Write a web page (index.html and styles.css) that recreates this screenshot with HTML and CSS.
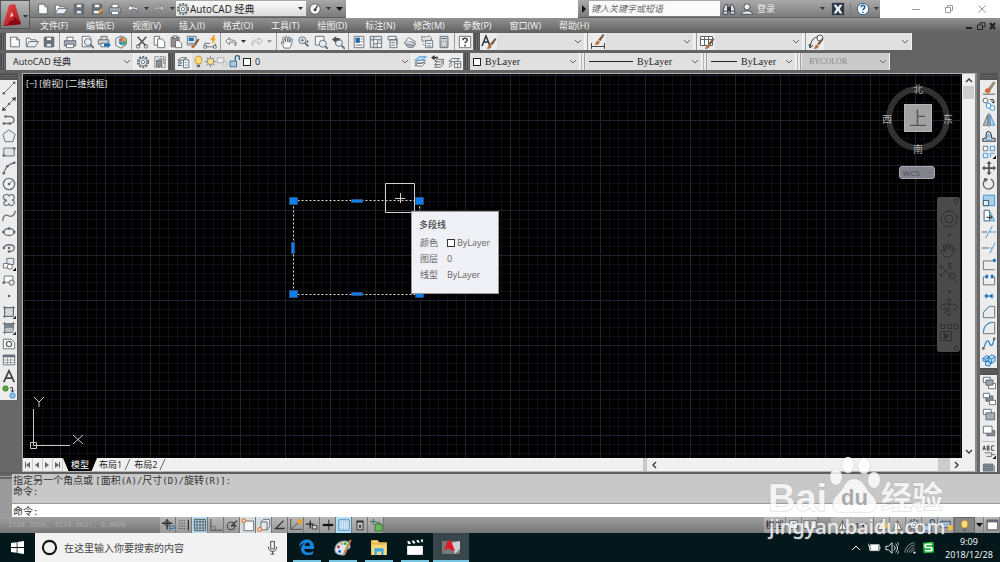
FILE: index.html
```html
<!DOCTYPE html>
<html lang="zh-CN">
<head>
<meta charset="utf-8">
<meta name="viewport" content="width=device-width, initial-scale=1">
<title>AutoCAD 经典</title>
<link rel="stylesheet" href="styles.css">
</head>
<body>
<div class="desktop">
  <header class="header">
    <button class="app-button" data-icon="app" aria-label="应用程序菜单"></button>
    <div class="titlebar">
      <div class="quick">
        <button data-icon="new" aria-label="新建"></button>
        <button data-icon="open" aria-label="打开"></button>
        <button data-icon="save" aria-label="保存"></button>
        <button data-icon="saveas" aria-label="另存为"></button>
        <button data-icon="print" aria-label="打印"></button>
        <button data-icon="undo" aria-label="放弃"></button>
        <button class="narrow" data-icon="caret" aria-label="放弃列表"></button>
        <button class="dim" data-icon="redo" aria-label="重做"></button>
        <button class="narrow" data-icon="caret" aria-label="重做列表"></button>
        <div class="title-combo"><span data-icon="gear"></span><select aria-label="工作空间"><option>AutoCAD 经典</option></select></div>
        <button data-icon="dial" aria-label="导航"></button>
        <button class="narrow" data-icon="caret" aria-label="更多"></button>
        <button class="narrow wide-caret" data-icon="bigcaret" aria-label="自定义"></button>
      </div>
      <div class="info">
        <button class="info-arrow" data-icon="play" aria-label="展开"></button>
        <input class="info-search" type="text" placeholder="键入关键字或短语" aria-label="搜索">
        <button data-icon="binoc" aria-label="查找"></button>
        <button data-icon="user" aria-label="用户"></button>
        <button class="login">登录</button>
        <button class="narrow push" data-icon="caret" aria-label="登录菜单"></button>
        <button class="exchange" data-icon="exchange" aria-label="Exchange"></button>
        <span class="bar"></span>
        <button data-icon="helpround" aria-label="帮助"></button>
        <button class="narrow" data-icon="caret" aria-label="帮助菜单"></button>
      </div>
      <div class="window-controls">
        <button data-icon="min" aria-label="最小化"></button>
        <button data-icon="restore" aria-label="还原"></button>
        <button data-icon="close" aria-label="关闭"></button>
      </div>
    </div>
    <nav class="menubar">
      <button>文件(F)</button><button>编辑(E)</button><button>视图(V)</button><button>插入(I)</button><button>格式(O)</button><button>工具(T)</button><button>绘图(D)</button><button>标注(N)</button><button>修改(M)</button><button>参数(P)</button><button>窗口(W)</button><button>帮助(H)</button>
      <div class="doc-controls">
        <button data-icon="docmin" aria-label="最小化图形"></button>
        <button data-icon="docrestore" aria-label="还原图形"></button>
        <button data-icon="docclose" aria-label="关闭图形"></button>
      </div>
    </nav>
  </header>

  <div class="toolbars">
    <div class="toolbar-row">
      <div class="toolbar">
        <i class="grip"></i>
        <button data-icon="new" aria-label="新建"></button>
        <button data-icon="open" aria-label="打开"></button>
        <button data-icon="save" aria-label="保存"></button>
        <i class="sep"></i>
        <button data-icon="print" aria-label="打印"></button>
        <button data-icon="preview" aria-label="打印预览"></button>
        <button data-icon="publish" aria-label="发布"></button>
        <button data-icon="cube" aria-label="三维 DWF"></button>
        <i class="sep"></i>
        <button data-icon="cut" aria-label="剪切"></button>
        <button data-icon="copy" aria-label="复制"></button>
        <button data-icon="paste" aria-label="粘贴"></button>
        <button data-icon="match" aria-label="特性匹配"></button>
        <button data-icon="blockedit" aria-label="块编辑器"></button>
        <i class="sep"></i>
        <button data-icon="undo" aria-label="放弃"></button>
        <button class="narrow" data-icon="caret" aria-label="放弃列表"></button>
        <button class="dim" data-icon="redo" aria-label="重做"></button>
        <button class="narrow dim" data-icon="caret" aria-label="重做列表"></button>
        <i class="sep"></i>
        <button data-icon="hand" aria-label="平移"></button>
        <button data-icon="zoomrt" aria-label="实时缩放"></button>
        <button data-icon="zoomwin" aria-label="窗口缩放"></button>
        <button data-icon="zoomprev" aria-label="缩放上一个"></button>
        <i class="sep"></i>
        <button data-icon="props" aria-label="特性"></button>
        <button data-icon="dcenter" aria-label="设计中心"></button>
        <button data-icon="palette" aria-label="工具选项板"></button>
        <button data-icon="sheets" aria-label="图纸集"></button>
        <button data-icon="markup" aria-label="标记集"></button>
        <button data-icon="calc" aria-label="快速计算器"></button>
        <i class="sep"></i>
        <button data-icon="helpsq" aria-label="帮助"></button>
      </div>
      <div class="toolbar">
        <i class="grip"></i>
        <button data-icon="textstyle" aria-label="文字样式管理"></button>
        <select class="combo w88" aria-label="文字样式"><option></option></select>
        <i class="sep"></i>
        <button data-icon="dimstyle" aria-label="标注样式管理"></button>
        <select class="combo w88" aria-label="标注样式"><option></option></select>
        <i class="sep"></i>
        <button data-icon="tablestyle" aria-label="表格样式管理"></button>
        <select class="combo w88" aria-label="表格样式"><option></option></select>
        <i class="sep"></i>
        <button data-icon="leaderstyle" aria-label="多重引线样式管理"></button>
        <select class="combo w88" aria-label="多重引线样式"><option></option></select>
      </div>
    </div>
    <div class="toolbar-row">
      <div class="toolbar">
        <i class="grip"></i>
        <select class="combo w128" aria-label="工作空间"><option>AutoCAD 经典</option></select>
        <button data-icon="gear" aria-label="工作空间设置"></button>
        <button data-icon="myspace" aria-label="我的工作空间"></button>
      </div>
      <div class="toolbar">
        <i class="grip"></i>
        <button data-icon="layerprops" aria-label="图层特性"></button>
        <div class="combo-box w220">
          <span data-icon="bulb"></span><span data-icon="sun"></span><span data-icon="vpfreeze"></span><span data-icon="unlock"></span><span class="swatch"></span>
          <select class="combo" aria-label="图层"><option>0</option></select>
        </div>
        <button data-icon="layercur" aria-label="置为当前"></button>
        <button data-icon="layerprev" aria-label="上一个图层"></button>
        <button data-icon="layerstate" aria-label="图层状态"></button>
      </div>
      <div class="toolbar">
        <i class="grip"></i>
        <div class="combo-box w110">
          <span class="swatch"></span>
          <select class="combo serif" aria-label="颜色"><option>ByLayer</option></select>
        </div>
        <i class="sep double"></i>
        <div class="combo-box w116">
          <span class="line long"></span>
          <select class="combo serif" aria-label="线型"><option>ByLayer</option></select>
        </div>
        <i class="sep double"></i>
        <div class="combo-box w88">
          <span class="line"></span>
          <select class="combo serif" aria-label="线宽"><option>ByLayer</option></select>
        </div>
        <i class="sep double"></i>
        <select class="combo w88 off" aria-label="打印样式" disabled><option>BYCOLOR</option></select>
      </div>
    </div>
  </div>

  <main class="work">
    <div class="side-tools">
      <i class="grip-top"></i>
      <button data-icon="line" aria-label="直线"></button>
      <button data-icon="xline" aria-label="构造线"></button>
      <button data-icon="pline" aria-label="多段线"></button>
      <button data-icon="polygon" aria-label="多边形"></button>
      <button data-icon="rect" aria-label="矩形"></button>
      <button data-icon="arc" aria-label="圆弧"></button>
      <button data-icon="circle" aria-label="圆"></button>
      <button data-icon="cloud" aria-label="修订云线"></button>
      <button data-icon="spline" aria-label="样条曲线"></button>
      <button data-icon="ellipse" aria-label="椭圆"></button>
      <button data-icon="earc" aria-label="椭圆弧"></button>
      <button data-icon="insert" aria-label="插入块"></button>
      <button data-icon="block" aria-label="创建块"></button>
      <button data-icon="point" aria-label="点"></button>
      <button data-icon="hatch" aria-label="图案填充"></button>
      <button data-icon="gradient" aria-label="渐变色"></button>
      <button data-icon="region" aria-label="面域"></button>
      <button data-icon="table" aria-label="表格"></button>
      <button data-icon="mtext" aria-label="多行文字"></button>
      <button data-icon="addsel" aria-label="添加选定对象"></button>
    </div>

    <section class="drawing">
      <div class="view">
        <div class="canvas">
          <p class="view-label">[−] [俯视] [二维线框]</p>
          <svg class="selection" width="160" height="130" viewBox="0 0 160 130">
            <g fill="none" stroke="#d8d8d0" stroke-dasharray="2 2">
              <path d="M15.5 24.5H141.500V118.500H15.500Z"/>
            </g>
            <g fill="#0a7ff0" stroke="#2b4f7c">
              <path d="M11.500 21.500h8v7h-8zM137.500 21.500h8v7h-8zM11.500 114.500h8v7h-8zM137.500 114.500h8v7h-8zM73.500 23.500h11v3h-11zM73.500 116.500h11v3h-11zM13.500 66.500h3v11h-3z"/>
            </g>
            <path d="M107.500 7.500h29v29h-29zM117 22.500h10M122.500 17v10" fill="none" stroke="#d2d2cc"/>
          </svg>
          <div class="tooltip">
            <strong>多段线</strong>
            <dl>
              <dt>颜色</dt><dd><span class="tip-swatch"></span>ByLayer</dd>
              <dt>图层</dt><dd>0</dd>
              <dt>线型</dt><dd>ByLayer</dd>
            </dl>
          </div>
          <div class="compass">
            <span class="n">北</span><span class="w">西</span><button class="face">上</button><span class="e">东</span><span class="s">南</span>
          </div>
          <button class="wcs">WCS <i></i></button>
          <div class="navbar">
            <svg width="23" height="155" viewBox="0 0 23 155" fill="none" stroke="#303030">
              <circle cx="19" cy="4" r="2"/><circle cx="12" cy="22" r="8"/><circle cx="12" cy="22" r="4"/>
              <path d="M11 37h3l-1.500 2zM11 66h3l-1.500 2zM11 94h3l-1.500 2z" fill="#303030"/>
              <path d="M8 60c-3-4-5-6-4-7s3 1 4 2l-2-6c0-1 2-1 2 0l1 4 1-6c0-1 2-1 2 0v6l2-5c1-1 2 0 2 1l-1 5 3-2c1 0 1 1 0 2l-5 6z"/>
              <path d="M3 69l11 10M14 69L3 79M3 72v-3h3M11 69h3v3M3 76v3h3"/><circle cx="15" cy="79" r="3"/><path d="M17 81l3 4"/>
              <path d="M12 101v18M9 104l3-3 3 3M9 116l3 3 3-3M10 113c-9 0-9-6 0-6h4c8 0 8 5 2 6M7 110l4 3-4 3"/>
              <path d="M3.500 127.500h4v4h-4zM10.500 127.500h4v4h-4zM16.500 127.500h4v4h-4zM3.500 134.500h11v9h-11z"/><path d="M7 136v6l5-3z" fill="#303030"/>
              <circle cx="19" cy="151" r="2"/>
            </svg>
          </div>
          <svg class="ucs" width="66" height="60" viewBox="0 0 66 60" fill="none" stroke="#c8c8c8">
            <path d="M4.500 48.500h6v6h-6zM7.500 51.500V15M7.500 51.500H44M8 3l5 5 5-5M13 8v5M47 41l10 9M57 41l-10 9"/>
          </svg>
        </div>
        <div class="vscroll">
          <button data-icon="chevup" aria-label="向上滚动"></button>
          <span class="thumb"></span>
          <button class="last" data-icon="chevdown" aria-label="向下滚动"></button>
        </div>
      </div>
      <div class="tabs">
        <button class="step" data-icon="first" aria-label="第一个"></button>
        <button class="step" data-icon="prev" aria-label="上一个"></button>
        <button class="step" data-icon="next" aria-label="下一个"></button>
        <button class="step" data-icon="last" aria-label="最后一个"></button>
        <button class="tab active">模型</button>
        <button class="tab">布局1</button>
        <button class="tab">布局2</button>
        <div class="hscroll">
          <span class="splitter"></span>
          <button data-icon="chevleft" aria-label="向左滚动"></button>
          <span class="thumb"></span>
          <button data-icon="chevright" aria-label="向右滚动"></button>
        </div>
      </div>
    </section>

    <div class="side-tools right">
      <i class="grip-top"></i>
      <button data-icon="erase" aria-label="删除"></button>
      <button data-icon="copyobj" aria-label="复制"></button>
      <button data-icon="mirror" aria-label="镜像"></button>
      <button data-icon="offset" aria-label="偏移"></button>
      <button data-icon="array" aria-label="阵列"></button>
      <button data-icon="move" aria-label="移动"></button>
      <button data-icon="rotate" aria-label="旋转"></button>
      <button data-icon="scale" aria-label="缩放"></button>
      <button data-icon="stretch" aria-label="拉伸"></button>
      <button data-icon="trim" aria-label="修剪"></button>
      <button data-icon="extend" aria-label="延伸"></button>
      <button data-icon="breakpt" aria-label="打断于点"></button>
      <button data-icon="break" aria-label="打断"></button>
      <button data-icon="join" aria-label="合并"></button>
      <button data-icon="chamfer" aria-label="倒角"></button>
      <button data-icon="fillet" aria-label="圆角"></button>
      <button data-icon="blend" aria-label="光顺曲线"></button>
      <button data-icon="explode" aria-label="分解"></button>
      <i class="grip-top"></i>
      <button data-icon="front" aria-label="前置"></button>
      <button data-icon="back" aria-label="后置"></button>
      <button data-icon="above" aria-label="置于对象之上"></button>
      <button data-icon="under" aria-label="置于对象之下"></button>
      <i class="side-sep"></i>
      <button data-icon="abc" aria-label="注释前置"></button>
      <button data-icon="hatchback" aria-label="图案填充后置"></button>
    </div>
  </main>

  <section class="command">
    <i class="command-grip"></i>
    <div class="command-body">
      <div class="history">
        <p>指定另一个角点或 <span class="latin">[</span>面积<span class="latin">(A)/</span>尺寸<span class="latin">(D)/</span>旋转<span class="latin">(R)]:</span></p>
        <p>命令<span class="latin">:</span></p>
      </div>
      <div class="prompt"><label for="cmd">命令<span class="latin">:</span></label><input id="cmd" type="text"></div>
    </div>
  </section>

  <footer class="status">
    <span class="coords">2188.3856, 1534.8837, 0.0000</span>
    <div class="modes">
      <button data-icon="infer" aria-label="推断约束"></button>
      <button data-icon="snap" aria-label="捕捉模式"></button>
      <button class="on" data-icon="grid" aria-label="栅格显示"></button>
      <button data-icon="ortho" aria-label="正交模式"></button>
      <button data-icon="polar" aria-label="极轴追踪"></button>
      <button class="on pale" data-icon="osnap" aria-label="对象捕捉"></button>
      <button class="on pale" data-icon="osnap3" aria-label="三维对象捕捉"></button>
      <button data-icon="otrack" aria-label="对象捕捉追踪"></button>
      <button data-icon="ducs" aria-label="动态 UCS"></button>
      <button data-icon="dyn" aria-label="动态输入"></button>
      <button data-icon="lwt" aria-label="线宽"></button>
      <button class="on" data-icon="tpy" aria-label="透明度"></button>
      <button data-icon="qp" aria-label="快捷特性"></button>
      <button data-icon="sc" aria-label="选择循环"></button>
    </div>
    <div class="status-right">
      <button class="model">模型</button>
      <button data-icon="qvlayout" aria-label="快速查看布局"></button>
      <button data-icon="qvdrawing" aria-label="快速查看图形"></button>
      <button class="scale"><span data-icon="anno"></span>1:1<span data-icon="bigcaret"></span></button>
      <button data-icon="annovis" aria-label="注释可见性"></button>
      <button data-icon="anno" aria-label="自动添加比例"></button>
      <button data-icon="gear" aria-label="切换工作空间"></button>
      <button data-icon="unlock" aria-label="锁定"></button>
      <button data-icon="hardware" aria-label="硬件加速"></button>
      <button class="isolate" data-icon="bulb" aria-label="隔离对象"></button>
      <button class="narrow" data-icon="bigcaret" aria-label="状态栏菜单"></button>
      <button data-icon="clean" aria-label="全屏显示"></button>
    </div>
  </footer>

  <nav class="taskbar">
    <button class="start" data-icon="windows" aria-label="开始"></button>
    <label class="search">
      <span data-icon="cortana"></span>
      <input type="text" placeholder="在这里输入你要搜索的内容" aria-label="搜索">
      <span data-icon="mic"></span>
    </label>
    <button class="task" data-icon="edge" aria-label="Edge"></button>
    <button class="task" data-icon="paint" aria-label="画图"></button>
    <button class="task" data-icon="folder" aria-label="文件资源管理器"></button>
    <button class="task" data-icon="clapper" aria-label="视频"></button>
    <button class="task current" data-icon="acad" aria-label="AutoCAD"></button>
    <div class="tray">
      <button data-icon="trayup" aria-label="显示隐藏的图标"></button>
      <button data-icon="battery" aria-label="电池"></button>
      <button data-icon="volume" aria-label="音量"></button>
      <button data-icon="wifi" aria-label="网络"></button>
      <button data-icon="sogou" aria-label="输入法"></button>
      <button class="clock"><span>9:09</span><span>2018/12/28</span></button>
    </div>
  </nav>

  <svg class="watermark" width="182" height="86" viewBox="0 0 182 86" role="img" aria-label="Baidu 经验">
    <g class="mark">
      <text class="mark-latin" x="1" y="56">Bai</text>
      <ellipse cx="69" cy="22" rx="6" ry="8"/><ellipse cx="81" cy="10" rx="6" ry="8"/><ellipse cx="97" cy="11" rx="6" ry="8"/><ellipse cx="107" cy="25" rx="6" ry="8"/>
      <path d="M87 24c8 0 11 7 14 12 5 6 10 9 8 16-2 7-10 5-22 5s-19 2-21-5c-2-7 4-11 8-16 4-5 5-12 13-12z"/>
      <text class="mark-cjk" x="114" y="53">经验</text>
      <text class="mark-url" x="2" y="79">jingyan.baidu.com</text>
    </g>
    <text class="mark-du" x="74" y="50">du</text>
  </svg>
</div>
<script src="icons.js"></script>
</body>
</html>
```
FILE: styles.css
```css
* { box-sizing: border-box; }
body {
  margin: 0;
  font: 9px/12px "Open Sans", "Noto Sans CJK SC", sans-serif;
  color: #222;
  background: #686868;
}
button, input, select { font: inherit; color: inherit; margin: 0; padding: 0; border: 0; border-radius: 0; background: none; }
button { display: flex; align-items: center; justify-content: center; white-space: nowrap; }
select { appearance: none; }
input { min-width: 0; }
p, dl, dd { margin: 0; }
svg { display: block; flex: none; }
[data-icon] { display: flex; flex: none; align-items: center; justify-content: center; }
.dim { opacity: 0.45; }

.desktop { position: relative; display: flex; flex-direction: column; height: 100vh; overflow: hidden; }

/* Title and menu */
.header { display: grid; grid-template-columns: 30px 1fr; grid-template-rows: 18px 15px; background: linear-gradient(#8e8e8e, #6a6a6a); }
.app-button { grid-row: 1 / 3; height: 29px; background: linear-gradient(#b8b8b8, #7c7c7c); border: 1px solid #555; }
.titlebar { display: flex; background: #fff; }
.quick, .info { display: flex; align-items: center; background: linear-gradient(#a9a9a9, #7b7b7b); border-bottom: 1px solid #5c5c5c; }
.quick { padding-left: 4px; }
.quick > button, .info > button { width: 18px; height: 17px; }
.quick > .narrow, .info > .narrow, .narrow { width: 8px; }
.quick > .wide-caret { width: 14px; }
.title-combo { display: flex; align-items: center; width: 130px; height: 15px; background: linear-gradient(#fafafa, #dcdcdc); }
.title-combo select { flex: 1; height: 15px; font-size: 10px; background: url("data:image/svg+xml,%3Csvg xmlns='http://www.w3.org/2000/svg' width='6' height='4'%3E%3Cpath d='M0 0h5L2.500 3z' fill='%23333'/%3E%3C/svg%3E") no-repeat right 2px center; }
.info { flex: 0 0 302px; margin-left: auto; }
.info > .info-arrow { width: 11px; }
.info-search { width: 131px; height: 15px; padding-left: 2px; background: #fafafa; }
.info-search::placeholder { color: #666; font-style: italic; opacity: 1; }
.info > .login { width: 20px; color: #eee; font-size: 9px; }
.info > .push { margin-left: auto; }
.info > .exchange { margin-left: 3px; }
.bar { width: 1px; height: 12px; margin: 0 3px; background: #777; }
.window-controls { display: flex; flex: 0 0 120px; justify-content: flex-end; padding-right: 2px; }
.window-controls button { width: 33px; height: 17px; }
.menubar { display: flex; align-items: center; padding-left: 10px; gap: 18px; color: #f4f4f4; background: linear-gradient(#929292, #606060); }
.doc-controls { display: flex; margin-left: auto; padding-right: 1px; }
.doc-controls button { width: 12px; }

/* Toolbars */
.toolbars { display: flex; flex-direction: column; gap: 3px; padding-bottom: 3px; background: #636363; }
.toolbar-row { display: flex; gap: 1px; }
.toolbar { display: flex; height: 17px; background: #ececec; }
.toolbar button { width: 17px; height: 17px; }
.toolbar .narrow { width: 9px; }
.grip { width: 6px; background: repeating-linear-gradient(90deg, #4a4a4a 0 1px, #6c6c6c 1px 2px); border: 1px solid #565656; }
.sep { width: 4px; border-right: 1px solid #9c9c9c; margin-right: 1px; margin-left: -1px; }
.double { width: 4px; margin: 0 1px; border-left: 1px solid #b4b4b4; }
.combo {
  background: #e0e0e0 url("data:image/svg+xml,%3Csvg xmlns='http://www.w3.org/2000/svg' width='8' height='6'%3E%3Cpath d='M1 1l3 3 3-3' fill='none' stroke='%23666'/%3E%3C/svg%3E") no-repeat right 2px center;
  height: 17px; padding-left: 7px; border-right: 1px solid #f6f6f6;
}
.combo-box { display: flex; align-items: center; background: #e0e0e0; }
.combo-box [data-icon] { width: 12px; }
.combo-box .combo { flex: 1; min-width: 0; padding-left: 4px; }
.swatch { flex: none; width: 8px; height: 8px; margin-left: 3px; background: #fff; border: 1px solid #222; }
.line { flex: none; width: 26px; height: 1px; margin-left: 3px; background: #222; }
.line.long { width: 44px; }
.serif { font-family: "Liberation Serif", serif; font-size: 10px; }
.off { color: #888; background-color: #cacaca; font: 8px "Liberation Serif", serif; opacity: 1; }
.w88 { width: 88px; }
.w110 { width: 110px; }
.w116 { width: 116px; }
.w128 { width: 128px; }
.w220 { width: 220px; }

/* Work area */
.work { display: flex; flex: 1; min-height: 0; }
.side-tools { display: flex; flex: none; flex-direction: column; align-self: flex-start; width: 18px; background: #ececec; border-right: 1px solid #555; }
.side-tools.right { align-self: stretch; margin: 0 2px 0 3px; overflow: hidden; }
.side-tools button { flex: none; height: 16px; }
.grip-top { flex: none; height: 7px; background: repeating-linear-gradient(#4c4c4c 0 1px, #666 1px 2px); border: 1px solid #555; }
.side-sep { flex: none; height: 1px; margin: 2px; background: #bbb; }
.drawing { display: flex; flex: 1; flex-direction: column; margin-left: 4px; border: 1px solid #b4b4b4; border-right: 2px solid #8a8a8a; background: #f0f0f0; }
.view { display: flex; flex: 1; }
.canvas {
  position: relative; flex: 1; overflow: hidden; background-color: #000;
  background-image:
    linear-gradient(90deg, #22222c 1px, transparent 1px), linear-gradient(#22222c 1px, transparent 1px),
    linear-gradient(90deg, #0f0f13 1px, transparent 1px), linear-gradient(#0f0f13 1px, transparent 1px);
  background-size: 45px 45px, 45px 45px, 9px 9px, 9px 9px;
  background-position: 37px 1px;
}
.view-label { padding: 4px 3px; color: #e4e4e4; }
.selection { position: absolute; left: 255px; top: 102px; }
.tooltip { position: absolute; left: 388px; top: 137px; width: 88px; padding: 7px; color: #666; background: #f0f0f7; border: 1px solid #999; }
.tooltip strong { font-weight: 500; color: #444; }
.tooltip dl { display: grid; grid-template-columns: 27px 1fr; padding: 4px 0 3px 1px; line-height: 16px; }
.tooltip dd { display: flex; align-items: center; gap: 2px; }
.tip-swatch { width: 8px; height: 8px; border: 1px solid #333; background: #fff; }
.compass { position: absolute; right: 12px; top: 12px; width: 64px; height: 65px; border: 6px solid #313131; border-radius: 50%; color: #aaa; font-size: 10px; }
.compass span { position: absolute; line-height: 12px; }
.compass .n { left: 21px; top: -9px; }
.compass .s { left: 21px; top: 51px; }
.compass .w { left: -10px; top: 21px; }
.compass .e { left: 51px; top: 21px; }
.face { width: 28px; height: 28px; margin: 12px; color: #555; background: #a2a2a2; border: 1px solid #b4b4b4; font-size: 18px; }
.wcs { position: absolute; right: 27px; top: 92px; width: 36px; height: 13px; gap: 5px; color: #4a4a52; background: #84848e; border: 1px solid #aaaab4; border-radius: 3px; font-size: 8px; }
.wcs i { width: 6px; border-top: 1px solid #777; }
.navbar { position: absolute; right: 2px; top: 123px; background: #4a4a4a; border-radius: 3px; }
.ucs { position: absolute; left: 3px; bottom: 4px; }
.vscroll { display: flex; flex-direction: column; width: 13px; background: #f0f0f0; }
.vscroll button { height: 12px; }
.vscroll .thumb { height: 13px; margin: 0 1px; background: #cdcdcd; }
.vscroll .last { margin-top: auto; }
.tabs { display: flex; height: 13px; }
.step { width: 10px; border-right: 1px solid #ccc; }
.tab { padding: 0 0 0 6px; }
.tab::after { content: ""; width: 1px; height: 11px; margin-left: 5px; background: #666; transform: skewX(-24deg); }
.tab.active { padding: 0 8px; color: #fff; background: #000; clip-path: polygon(0 0, 100% 0, 84% 100%, 16% 100%); }
.tab.active::after { content: none; }
.tab.active + .tab { padding-left: 2px; }
.hscroll { display: flex; flex: 1 1 0; max-width: 332px; margin-left: auto; padding-right: 12px; }
.splitter { width: 4px; background: #c8c8c8; }
.hscroll button { width: 13px; }
.hscroll .thumb { width: 12px; margin-left: auto; background: #cdcdcd; }

/* Command line */
.command { display: flex; padding-top: 2px; background: #5e5e5e; }
.command-grip { width: 12px; background: #9a9a9a; border-top: 5px double #666; }
.command-body { flex: 1; font: 10px/11px "Noto Sans CJK SC", sans-serif; color: #333; }
.latin { font: 9px/9px "DejaVu Sans Mono", monospace; }
.history { height: 30px; padding-left: 1px; background: #c8c8c8; border-bottom: 1px solid #999; }
.history p { height: 11px; }
.prompt { display: flex; padding-left: 1px; background: #fff; height: 13px; line-height: 13px; }
.prompt input { flex: 1; }

/* Status bar */
.status { display: flex; height: 16px; background: linear-gradient(#9e9e9e, #767676); }
.coords { width: 160px; padding-left: 8px; color: #a8a8a8; font: 7px/17px "DejaVu Sans Mono", monospace; }
.modes, .status-right { display: flex; }
.modes button { width: 16px; border-right: 1px solid #777; background: linear-gradient(#b8b8b8, #989898); }
.modes .on { background: #b4def2; }
.modes .pale { background: #d4dce0; }
.status-right { margin-left: auto; }
.status-right button { height: 16px; width: 16px; background: linear-gradient(#b8b8b8, #989898); border-right: 1px solid #808080; }
.status-right .model { width: 22px; }
.status-right .scale { width: 43px; margin-left: 13px; font-size: 8px; }
.status-right .isolate { width: 21px; background: #858585; border: 1px solid #666; }
.status-right .narrow { width: 9px; }

/* Taskbar */
.taskbar { display: flex; height: 29px; background: #04181c; color: #fff; }
.start { width: 35px; }
.search { display: flex; align-items: center; width: 252px; padding: 0 7px 0 6px; gap: 6px; color: #222; background: #f2f2f2; }
.search input { flex: 1; font-size: 10px; }
.search input::placeholder { color: #444; opacity: 1; }
.task { width: 28px; margin-left: 8px; border-bottom: 2px solid #76c5e0; padding-top: 1px; }
.search + .task { margin-left: 6px; }
.task.current { width: 36px; margin-left: 4px; background: #37474b; }
.tray { display: flex; align-items: center; margin-left: auto; padding-right: 4px; }
.tray > button { width: 18px; }
.tray > .clock { flex-direction: column; width: 54px; margin-left: 5px; line-height: 13px; }

.watermark { position: absolute; right: 51px; bottom: 21px; pointer-events: none; }
.mark { fill: #fff; fill-opacity: 0.82; stroke: #9a9a9a; stroke-opacity: 0.4; stroke-width: 1px; paint-order: stroke; }
.mark-latin { font: bold 38px "Liberation Sans", sans-serif; }
.mark-cjk { font: bold 31px "Noto Sans CJK SC", sans-serif; }
.mark-url { font: 500 20px "Noto Sans", sans-serif; }
.mark-du { font: bold 22px "Liberation Sans", sans-serif; fill: #aaa; }
```
FILE: icons.js
```js
// Each entry: [width, height, markup]; drawings use a 16-unit box unless a viewBox is given as a fourth item.
const K = '#5c666f', B = '#3a90d4';
const page = 'M3 2.500h7l3 3v8H3z';
const P = (d, stroke = K, fill = 'none') => `<path d="${d}" stroke="${stroke}" fill="${fill}"/>`;
const dot = (x, y, c = K) => `<circle cx="${x}" cy="${y}" r="1.500" fill="${c}"/>`;
const lens = (x, y) => `<circle cx="${x}" cy="${y}" r="4" fill="#e4eef5" stroke="${K}"/>` + `<path d="M${x + 3} ${y + 3}l4 4" stroke="${K}" stroke-width="2"/>`;
const brush = '<path d="M9 10l5-6 1.500 1-4 6z" fill="#7a5a40"/><path d="M6 15c1-4 2-5 4-4 2 2-1 4-4 4z" fill="#b8703c"/>';
const small = (m) => [14, 14, m];

const icons = {
  app: [28, 26, '<defs><linearGradient id="ra" x2="1" y2="1"><stop stop-color="#f25050"/><stop offset="1" stop-color="#9c0c14"/></linearGradient></defs><path d="M2 24L8 3l6-1 6 20-6 1-2-5-4 1-1 4z" fill="url(#ra)"/><path d="M9 15l1.500-5 2 4z" fill="#f6c8c8"/><path d="M2 24l5-2 1-3 4-1 2-3 6 7-6 1z" fill="#8c0810"/><path d="M22 13h5l-2.500 3z" fill="#333"/>', '0 0 28 26'],
  new: small(P(page, K, '#fafafa') + P('M10 2.500v3h3')),
  open: small(P('M1.500 13V3.500h4l1 2h6v2', K, '#fff') + P('M1.500 13.500l3-6h11l-4 6z', K, '#e8eef2')),
  save: small(P('M2.500 2.500h11v11h-11z', K, '#65717c') + P('M5 2.500h6v4H5z', K, '#fff') + P('M5 9.500h6v4H5z', K, '#e8e8e8')),
  saveas: small(P('M2.500 2.500h11v11h-11z', K, '#65717c') + P('M5 2.500h6v4H5zM4 9.500h7v4H4z', K, '#fff') + '<path d="M8 13l5-6 2 2-5 5z" fill="#e09a38"/>'),
  print: small(P('M4.500 7V2.500h7V7', K, '#fff') + P('M1.500 6.500h13v6h-13z', K, '#a4adb4') + P('M4 10.500h8v4H4z', K, '#fff')),
  undo: small(P('M6 3L2 7l4 4V8.500c5-1 7 0 7 4 2-5 0-7-7-7z', K, '#f4f4f4')),
  redo: small(P('M10 3l4 4-4 4V8.500c-5-1-7 0-7 4-2-5 0-7 7-7z', K, '#f4f4f4')),
  caret: [5, 4, '<path d="M0 0h5L2.500 3z" fill="#333"/>', '0 0 5 4'],
  bigcaret: [7, 6, '<path d="M0 1h7L3.500 5z" fill="#111"/>', '0 0 7 6'],
  gear: small('<circle cx="8" cy="8" r="6" fill="none" stroke="#646d75" stroke-width="2" stroke-dasharray="2.400 1.400"/><circle cx="8" cy="8" r="4.500" fill="#f0f0f0" stroke="#646d75"/><circle cx="8" cy="8" r="2" fill="#fff" stroke="#646d75"/>'),
  dial: small('<circle cx="8" cy="8" r="6" fill="#f4f4f4" stroke="#555"/><path d="M8 9l3-5" stroke="#333" stroke-width="1.500"/><circle cx="8" cy="9" r="1.500" fill="#333"/>'),
  play: [6, 8, '<path d="M1 0l4 4-4 4z" fill="#111"/>', '0 0 6 8'],
  binoc: small('<path d="M1.500 14V8L4 3h2.500v11zM14.500 14V8L12 3H9.500v11z" fill="#d8dde2" stroke="#333d46"/><path d="M6.500 6h3v4h-3zM2 10.500h4M10 10.500h4" stroke="#333d46" fill="#333d46"/>'),
  user: small('<circle cx="8" cy="5.500" r="3.500" fill="#eee" stroke="#3c4650"/><path d="M1.500 14c1-5 12-5 13 0z" fill="#eee" stroke="#3c4650"/>'),
  exchange: small('<path d="M1 1h14v14H1z" fill="#2c3844"/><path d="M3 3h3l2 3 2-3h3l-3 5 3 5h-3l-2-3-2 3H3l3-5z" fill="#e8eef4"/>'),
  helpround: small('<circle cx="8" cy="8" r="6.500" fill="#fff" stroke="#28557c"/><path d="M6 6c0-3 4-3 4 0 0 1.500-2 1.500-2 3.500M8 11v1.500" fill="none" stroke="#2060a0" stroke-width="1.800"/>'),
  helpsq: small(P('M1.500 1.500h13v13h-13z', K, '#fff') + '<path d="M5.500 6c0-3 5-3 5 0 0 1.500-2.500 1.500-2.500 3.500M8 11v2" fill="none" stroke="#444" stroke-width="1.800"/>'),
  min: [8, 8, P('M0 4.500h8', '#999'), '0 0 8 8'],
  restore: [8, 8, P('M.5 2.500h5v5h-5zM2.500 2V.5h5v5H6', '#999'), '0 0 8 8'],
  close: [8, 8, P('M.5.5l7 7M7.500.5l-7 7', '#999'), '0 0 8 8'],
  docmin: [8, 8, '<path d="M1 5h6v2H1z" fill="#222"/>', '0 0 8 8'],
  docrestore: [9, 8, P('M.5 3h5v4.500h-5zM3 2.500V.8h5V5H6', '#222'), '0 0 9 8'],
  docclose: [8, 8, '<path d="M1 1l5 6M6 1L1 7" stroke="#222" stroke-width="2"/>', '0 0 8 8'],
  preview: small(P('M2.500 1.500h8l2 2v10h-10z', K, '#fafafa') + lens(9, 8)),
  publish: small(P('M4.500 6V1.500h7V6M1.500 5.500h12v5h-12z', K, '#cfd5da') + P('M4.500 9.500h7v4h-7z', K, '#fff') + '<path d="M8 10h4V8l4 3.500-4 3.500v-2H8z" fill="#1870c0"/>'),
  cube: small(P('M8 1l6 3v7l-6 4-6-3V4z', K, '#eef2f4') + '<circle cx="10" cy="7" r="4.500" fill="#fff" stroke="#488"/><path d="M10 7V3a4 4 0 0 1 4 4z" fill="#e0a030"/><path d="M10 7h4a4 4 0 0 1-4 4z" fill="#48a048"/><path d="M10 7v4a4 4 0 0 1-4-4z" fill="#38c"/><path d="M10 7H6a4 4 0 0 1 4-4z" fill="#d55"/>'),
  cut: small('<path d="M3 2l9 10M13 2L4 12" stroke="#555" stroke-width="1.800"/><circle cx="3.500" cy="13" r="2" fill="none" stroke="#555"/><circle cx="12.500" cy="13" r="2" fill="none" stroke="#555"/>'),
  copy: small(P('M2.500 1.500h6v10h-6z', K, '#fff') + P('M6.500 4.500h5l3 3v7h-8z', K, '#fff')),
  paste: small(P('M2.500 2.500h9v11h-9z', K, '#9a8f84') + P('M5 1h4v3H5z', K, '#ddd') + P('M7.500 6.500h4l3 3v5h-7z', K, '#fff')),
  match: small(P('M1.500 1.500h10v10h-10z', K, '#e8f1f8') + '<path d="M3 3h6v4H3z" fill="#1870c0"/>' + P('M3 9.500h6') + brush),
  blockedit: small(P('M2 13.500v-4h6M4 13.500h10v-4', K) + '<path d="M12 0l-4 6h3l-1 5 5-7h-3l2-4z" fill="#f0a020"/>' + P('M1 12h3v3H1zM12 12h3v3h-3z', K, '#fff')),
  hand: small(P('M5 15c-2-4-4-6-3.500-7s2 0 3 2L3 4c0-1.500 1.500-1.500 2 0l1.500 4L6 2.500c0-1.500 2-1.500 2 0L9 8l.5-5c0-1.500 2-1 2 0L11 8.500l1.500-4c.5-1 2-.5 1.500 1-.5 4-1 7-3 9.500z', K, '#fafafa')),
  zoomrt: small(lens(6, 6) + P('M4 6h4M6 4v4M12 9v-3M10.500 7.500h3')),
  zoomwin: small(P('M1.500 1.500h10v10h-10z', K, '#f4f7f9') + lens(10, 10)),
  zoomprev: small(lens(9, 9) + '<path d="M1 5l5-4v2.500h4v3H6V9z" fill="#555"/>'),
  props: small(P('M2.500 1.500h11v13h-11z', K, '#fff') + '<path d="M4 3h5v6H4z" fill="#2468a8"/>' + P('M10 4.500h2M10 7.500h2M4 11.500h8')),
  dcenter: small(P('M1.500 1.500h13v13h-13z', K, '#dfe5ea') + P('M5.500 2v12M2 5.500h12M9.500 6v8M6 9.500h8') + '<path d="M6 6h3v3H6zM10 10h3v3h-3z" fill="#fff"/>'),
  palette: small(P('M2.500 1.500h9v4h-9zM4.500 5.500h8v9h-8z', K, '#eef1f3') + P('M6 8.500h4M6 11.500h4M12.500 3v8')),
  sheets: small(P('M1.500 9l4-4 9 5-3 4h-6z', K, '#c8cfd5') + P('M3.500 6l3-3 8 5', K, '#fff') + P('M4 11l8 1')),
  markup: small('<path d="M2 2h6a3 3 0 0 1 5 2v3H2z" fill="#dde2e6" stroke="#555" stroke-dasharray="2 1"/>' + P('M6.500 6.500h8v8h-8z', K, '#fff') + P('M8 9.500h5M8 12.500h5M3 10l2 2')),
  calc: small(P('M3.500 1.500h9v13h-9z', K, '#d0d5d9') + P('M5 4h6', K) + '<path d="M5 7h6v6H5z" fill="none" stroke="#777" stroke-dasharray="1 1"/>'),
  textstyle: [16, 16, '<path d="M1 12L5 2l4 10M3 8h4" stroke="#333" stroke-width="1.500" fill="none"/>' + brush],
  dimstyle: [16, 16, P('M1.500 9v6M14.500 9v6M2 12.500h12', '#444') + '<g transform="translate(-1 -4)">' + brush + '</g>'],
  tablestyle: [16, 16, P('M1.500 2.500h12v9h-12zM2 5.500h11M5.500 3v8M9.500 3v8', K, '#fff') + brush],
  leaderstyle: [16, 16, P('M2 13C3 7 5 4 9 3M1 10l1 4 3-3', '#333') + '<circle cx="12" cy="4" r="3" fill="#fff" stroke="#555"/>' + brush],
  myspace: small('<path d="M2 2h12v12H2z" fill="none" stroke="#555" stroke-dasharray="2 1"/>' + P('M4 6h6v7H4z', K, '#8a949c') + P('M6.500 4.500h6v6', K)),
  layerprops: small(P('M1 6l4-3h6l-4 3zM1 9l4-3M1 9h5M1 12l4-3M1 12h5') + P('M7.500 5.500h6v9h-6z', K, '#fff') + P('M9 8.500h3M9 11.500h3', B)),
  bulb: [13, 13, '<path d="M5.500 11C3 8 3 2 8 1.500S13 8 10.500 11z" fill="#fbdc78" stroke="#a88430"/><path d="M6 12h4v3H6z" fill="#666"/>'],
  sun: [13, 13, '<path d="M8 1v14M1 8h14M3 3l10 10M13 3L3 13" stroke="#777"/><circle cx="8" cy="8" r="4" fill="#f8e088" stroke="#777"/>'],
  vpfreeze: [13, 13, '<g opacity=".45">' + P('M1.500 3.500h8v6h-8z', K, '#fff') + '<circle cx="11" cy="11" r="3" fill="none" stroke="#555" stroke-dasharray="1 1"/></g>'],
  unlock: [13, 13, '<path d="M9 7V3c0-3 5-3 5 0v3" fill="none" stroke="#2b5d88" stroke-width="1.500"/>' + P('M2.500 7.500h8v7h-8z', '#2b5d88', '#a8cce4')],
  layercur: small(P('M1 12l4-3h8l-4 4zM1 9l4-3h8l-4 4z', K, '#fff') + P('M1 6l5-4h8l-5 4z', B, '#b8dcf4')),
  layerprev: small(P('M4 7l3-2h7l-3 3zM4 11l3-3M4 14l3-3M4 11h7l3-3M4 14h7l3-3V5', K) + '<path d="M0 3l4-3v2h4v2H4v2z" fill="#333"/>'),
  layerstate: small(P('M1 7l4-3h8l-4 4zM1 11l4-3M1 14l4-3', K) + P('M7.500 7.500h7v7h-7z', K, '#fff') + P('M8 10h6M11 10v4')),
  line: small(P('M2 14L14 2') + dot(2, 14) + dot(14, 2)),
  xline: small(P('M2 14L14 2') + '<path d="M0 16l1-5 4 4zM16 0l-1 5-4-4z" fill="#444"/>' + dot(8, 8)),
  pline: small('<path d="M2 12h7c6 0 6-7 1-8H5" fill="none" stroke="#69727a" stroke-width="1.500"/>' + dot(2, 12) + dot(9, 12) + dot(4, 4)),
  polygon: small(P('M8 1l7 5-2.500 8.500h-9L1 6z', K, '#e8ebee')),
  rect: small(P('M2 3.500h12v9H2z', K, '#dfe3e7') + dot(2, 12) + dot(14, 4)),
  arc: small('<path d="M2 14C4 8 6 4 14 2" fill="none" stroke="#69727a" stroke-width="1.500"/>' + dot(2, 14) + dot(6, 6) + dot(14, 2)),
  circle: small('<circle cx="8" cy="8" r="6.500" fill="#eef0f2" stroke="#69727a" stroke-width="1.500"/>' + dot(8, 8) + P('M8 8l4-4')),
  cloud: small('<path d="M5 8C1 8 0 2 4 2c2-1 4 0 4 2 1-3 6-3 6 1 0 2-1 3-3 3 4 0 4 5 1 6-2 1-4 0-4-2-1 3-6 3-6 0 0-2 1-3 3-3z" fill="#e8ebee" stroke="#69727a" stroke-width="1.300"/>'),
  spline: small('<path d="M1 14c0-9 5-7 7-6s7 0 7-6" fill="none" stroke="#69727a" stroke-width="1.500"/>'),
  ellipse: small('<ellipse cx="8" cy="8" rx="6" ry="4" fill="#eef0f2" stroke="#69727a" stroke-width="1.500"/>' + dot(1.5, 8) + dot(14, 8) + dot(8, 4)),
  earc: small('<path d="M2 8c1-5 12-5 12 0 0 3-3 4-6 4" fill="none" stroke="#69727a" stroke-width="1.500"/>' + dot(2, 8) + dot(8, 12) + dot(8, 8)),
  insert: small(P('M5.500 1.500h8v7h-8z', K, '#e4e8ec') + P('M1.500 7.500h6v5h-6z', K, '#fff') + '<circle cx="9" cy="11" r="3" fill="#fff" stroke="#555"/><path d="M16 12v4h-4z" fill="#111"/>'),
  block: small(P('M2.500 3.500h10v7h-10z', K, '#fff') + '<circle cx="11" cy="11" r="3" fill="#dfe3e7" stroke="#555"/>' + dot(2, 11)),
  point: small('<circle cx="8" cy="8" r="1.500" fill="#666"/>'),
  hatch: small(P('M3 3h10v10H3z', K, '#e4e4e4') + P('M3 7l4-4M3 11l8-8M5 13l8-8M9 13l4-4', '#a0a8b0') + P('M1 3h14M1 13h12M3 1v14M13 1v10') + '<path d="M16 12v4h-4z" fill="#333"/>'),
  gradient: small('<path d="M3 3h10v5H3z" fill="#7c868e"/><path d="M3 8h10v5H3z" fill="#bcc2c8"/>' + P('M1 3h14M1 13h12M3 1v14M13 1v10') + '<path d="M16 12v4h-4z" fill="#333"/>'),
  region: small(P('M1.500 2.500h9l4 4v7h-13z', K, '#fff') + '<circle cx="8" cy="8" r="3" fill="#fff" stroke="#666" stroke-width="1.500"/>'),
  table: small(P('M1.500 2.500h13v11h-13z', K, '#fff') + '<path d="M1 2h14v3H1z" fill="#68727a"/>' + P('M1 8h14M1 11h14M6 5v8M10 5v8', '#87909a')),
  mtext: small('<path d="M2 15L8 2l6 13M4.500 10.500h7" fill="none" stroke="#444" stroke-width="2"/>'),
  addsel: small('<circle cx="4" cy="4" r="3" fill="#58a838" stroke="#387820"/><circle cx="12" cy="12" r="3" fill="#8cc8f0" stroke="#3880b8"/><path d="M9 3h3v5M10 6l2 2 2-2" fill="none" stroke="#222"/>'),
  erase: small('<path d="M7 9l6-8 2 1-6 9z" fill="#b09070" stroke="#555" stroke-width=".6"/><path d="M4 9l3-1 3 3-1 2-3 1-3-2z" fill="#d86438"/>' + P('M1 15h14', '#444')),
  copyobj: small('<circle cx="4" cy="4" r="2.800" fill="#fff" stroke="#555"/><circle cx="7.500" cy="10" r="2.800" fill="#fff" stroke="#2a86d0"/><circle cx="12" cy="12.500" r="2.800" fill="#fff" stroke="#2a86d0"/>' + P('M9 3h4v4M11 5l2 2 2-2', '#222')),
  mirror: small(P('M6.500 2v12h-5z', K, '#b8c0c8') + P('M9.500 2v12h5z', B, '#b0d8f4') + P('M8 0v16', '#444')),
  offset: small('<path d="M1 14h14v-3l-4-1c0-10-8-9-6 0l-4 1z" fill="#dce2e6" stroke="#444" stroke-width="1.300"/><path d="M3.500 12.500h9M7 10c-2-5 3-5 2 0" fill="none" stroke="#2a86d0"/>'),
  array: small(P('M1.500 1.500h5v5h-5z', K, '#fff') + P('M9.500 1.500h5v5h-5zM1.500 9.500h5v5h-5zM9.500 14v-4.500h5', B) + '<path d="M16 12v4h-4z" fill="#111"/>'),
  move: small('<path d="M8 0l3 3H9v4h4V5l3 3-3 3V9H9v4h2l-3 3-3-3h2V9H3v2L0 8l3-3v2h4V3H5z" fill="#4c5258"/>'),
  rotate: small('<path d="M4 3a6 6 0 1 0 6-.5" fill="none" stroke="#666" stroke-width="1.500"/><path d="M2 1l5 1-3 4z" fill="#555"/>'),
  scale: small(P('M1.500 2.500h13v12h-13z', B, '#a4d0ec') + P('M1.500 8.500h6v6h-6z', '#345', '#e4eef4')),
  stretch: small(P('M2.500 1.500h6l6 12h-12z', B, '#b8dcf0') + P('M2.500 1.500h6v12h-6z', K, '#fff') + P('M5 9.500h6M9 7l2.500 2.500L9 12', '#111')),
  trim: small(P('M4 15L12 1', B) + P('M0 8h6', '#555') + '<path d="M9 8h7" stroke="#2a86d0" stroke-dasharray="3 1"/>'),
  extend: small(P('M9 14L15 2', B) + P('M0 8h6', '#555') + '<path d="M6 8h6" stroke="#2a86d0" stroke-dasharray="2 1"/>'),
  breakpt: small(P('M14.500 14.500h-13v-10h10') + '<circle cx="14" cy="4" r="2" fill="#1870c0"/>'),
  break: small(P('M5 4.500H1.500v9h13v-9H11', K, '#eee') + '<path d="M4 2h3v4H4zM10 2h3v4h-3z" fill="#1870c0"/>'),
  join: small(P('M2 8h12', '#2a86d0') + '<path d="M8 8L4 5v6zM8 8l4-3v6z" fill="#1870c0"/>'),
  chamfer: small(P('M1.500 14.500v-6l7-7h6v13z', K, '#e8ecef') + P('M1.500 8.500l7-7', B)),
  fillet: small(P('M1.500 14.500C2 6 6 1.500 14.500 1.500v13z', K, '#e8ecef') + P('M1.500 12C2 6 6 1.500 12 1.500', B)),
  blend: small('<path d="M3 10c3-9 5-5 6-2s3 2 4-2" fill="none" stroke="#2a86d0" stroke-width="1.500"/>' + P('M1 14l2-4M13 6l1-5', '#333') + dot(1.5, 13) + dot(14, 2)),
  explode: small(P('M1 6l4-3 3 1v4l-4 2-3-1zM7 5l4-3 4 2v5l-4 3-4-2zM4 10l4-1 2 2-1 4-5-1z', '#1f7cc8', '#bcdcf2') + P('M1 6l3 1 4-3M4 7v3M7 5l4 2 4-3M11 7v5', '#1f7cc8')),
  front: small(P('M1.500 1.500h8v6h-8zM7.500 8.500h8v6h-8z', K, '#fff') + P('M4.500 4.500h8v6h-8z', K, '#9aa4ac')),
  back: small(P('M4.500 4.500h8v6h-8z', K, '#808a92') + P('M1.500 1.500h7v5h-7zM8.500 9.500h7v5h-7z', K, '#fff')),
  above: small(P('M1.500 1.500h9v6h-9z', K, '#fff') + P('M4.500 5.500h10v8h-10z', K, '#a4adb4')),
  under: small(P('M5.500 7.500h9v6h-9z', K, '#87919a') + P('M1.500 2.500h10v8h-10z', K, '#fff')),
  abc: small('<path d="M1 6l1.500-5L4 6M1.500 4h2M6 1v5h2V1zM6 3.500h2M14 1h-3v5h3" fill="none" stroke="#333"/>' + P('M3 9h8v4H5M11 11h4') + '<path d="M16 12v4h-4z" fill="#111"/>'),
  hatchback: small(P('M1.500 3.500h11v8h-11z', K, '#87919a') + P('M2 6h10M2 9h10M14 5v10H5')),
  chevup: [8, 6, '<path d="M1 5l3-3 3 3" fill="none" stroke="#444" stroke-width="1.500"/>', '0 0 8 6'],
  chevdown: [8, 6, '<path d="M1 1l3 3 3-3" fill="none" stroke="#444" stroke-width="1.500"/>', '0 0 8 6'],
  chevleft: [6, 8, '<path d="M5 1L2 4l3 3" fill="none" stroke="#444" stroke-width="1.500"/>', '0 0 6 8'],
  chevright: [6, 8, '<path d="M1 1l3 3-3 3" fill="none" stroke="#444" stroke-width="1.500"/>', '0 0 6 8'],
  first: [7, 8, '<path d="M1 1h1v6H1zM6 1v6L2 4z" fill="#666"/>', '0 0 7 8'],
  prev: [7, 8, '<path d="M5 1v6L1 4z" fill="#666"/>', '0 0 7 8'],
  next: [7, 8, '<path d="M1 1v6l4-3z" fill="#666"/>', '0 0 7 8'],
  last: [7, 8, '<path d="M5 1h1v6H5zM1 1v6l4-3z" fill="#666"/>', '0 0 7 8'],
  infer: small('<path d="M7 1v12M1 6h12" stroke="#333" stroke-width="1.500"/>' + P('M4 6a3 3 0 0 1 6 0 3 3 0 0 1-6 0', '#333') + '<path d="M10 15V9h5v3h-5" fill="none" stroke="#2870b0"/>'),
  snap: small('<path d="M2 3h8M2 6h8M2 9h8M2 12h8" stroke="#444" stroke-dasharray="1 1"/><path d="M13 2v12" stroke="#333" stroke-width="1.500"/>'),
  grid: small(P('M1.500 1.500h13v13h-13zM4.500 1v14M8 1v14M11.500 1v14M1 4.500h14M1 8h14M1 11.500h14', '#555')),
  ortho: small('<path d="M2 1v13h13" fill="none" stroke="#666" stroke-width="1.500"/>' + P('M2 9.500h5V14', '#666')),
  polar: small('<circle cx="7" cy="9" r="4.500" fill="none" stroke="#333"/><path d="M7 9l7-6M7 9h6" stroke="#333" stroke-width="1.500"/>'),
  osnap: small(P('M3.500 3.500h11v11h-11z', K, '#f8f8f8') + '<circle cx="3" cy="3" r="2" fill="#fff" stroke="#e87830" stroke-width="1.500"/>'),
  osnap3: small(P('M4.500 4.500l3-3h7v8l-3 4h-7z', K, '#e4e8ec') + P('M4.500 4.500h7v9', K) + '<circle cx="3" cy="13" r="2" fill="#fff" stroke="#e87830" stroke-width="1.500"/>'),
  otrack: small('<path d="M12 3L3 12h10" fill="none" stroke="#333" stroke-width="1.500"/>'),
  ducs: small(P('M2 1v12h13M2 13L12 4', '#444') + '<path d="M10 1l5 1-1 5-4-1z" fill="#f0a020"/>'),
  dyn: small('<path d="M6 3v9M1 7h9" stroke="#222" stroke-width="1.500"/>' + P('M8.500 8.500h5v4h-5z', '#333', '#ddd')),
  lwt: small('<path d="M2 8h12" stroke="#111" stroke-width="2.500"/><path d="M9 2v12" stroke="#111"/>'),
  tpy: small('<path d="M2 2h12v12H2z" fill="#d8ecf8" stroke="#4888b8"/><path d="M3 4h10M3 6h10M3 8h10M3 10h10M3 12h10" stroke="#78aed4" stroke-dasharray="1 1"/>'),
  qp: small(P('M4.500 3.500h7v10h-7z', '#333', '#bbb') + '<path d="M4 3h8v2H4zM7 8h2v3H7z" fill="#333"/>'),
  sc: small(P('M1 4h7M5 1v7M8 5h4v4', '#2c6e58') + '<path d="M7 7h8v8H7z" fill="#6cb858" stroke="#386830"/>'),
  qvlayout: small(P('M3 3h9v9H3z', K, '#eee') + P('M6 6h7v8', K)),
  qvdrawing: small(P('M1 3h6v9H1zM9 3h6v9H9z', K, '#eee')),
  anno: [11, 11, P('M8 1l6 13H2zM8 1v13', '#444', '#eee')],
  annovis: [12, 12, P('M8 1l6 13H2z', '#555', '#eee') + '<circle cx="12" cy="9" r="3" fill="#f8c040"/>'],
  hardware: small(P('M2 4h11v7H2z', '#3a5878', '#9cb8d0') + P('M4 2v2M8 2v2M12 2v2') + '<circle cx="13" cy="11" r="3" fill="#f8c040"/>'),
  clean: small(P('M2.500 2.500h12v11h-12z', '#444', '#fff') + '<path d="M2 2h13v3H2z" fill="#667"/>'),
  windows: [13, 13, '<path d="M0 2.500L7 1.500v6H0zM8 1.300L16 0v7.500H8zM0 8.500h7v6l-7-1zM8 8.500h8V16l-8-1.300z" fill="#fff"/>'],
  cortana: [17, 17, '<circle cx="8" cy="8" r="6.200" fill="none" stroke="#181818" stroke-width="2"/>'],
  mic: [15, 15, P('M6 1.500h4v8H6zM3.500 7c0 7 9 7 9 0M8 12v3M6 15h4', '#444')],
  edge: [16, 16, '<path d="M0 8C1-2 15-2 15 8v2H5c1 5 7 4 9 2v3C8 18 2 15 2 10c0-3 2-5 4-6-2 0-5 2-6 4zM5.500 7H11c0-5-5-4-5.500 0z" fill="#1686e0"/>'],
  paint: [18, 18, '<path d="M1 9c1-6 12-9 13-3s-3 2-4 5 1 4-3 4-7-2-6-6z" fill="#d8e8f4" stroke="#8ab"/><circle cx="4" cy="8" r="1.300" fill="#c33"/><circle cx="7" cy="5" r="1.300" fill="#e8a030"/><circle cx="10" cy="5" r="1.300" fill="#3a3"/><circle cx="5" cy="12" r="1.300" fill="#36c"/><path d="M8 14l6-13 1.500 1L10 15z" fill="#c88840"/>'],
  folder: [18, 18, '<path d="M1 2h6l1 2h7v11H1z" fill="#f8d878"/><path d="M1 4h14v2H1z" fill="#e8b84c"/><path d="M4 15V9h8v6h-2v-3H6v3z" fill="#38a8e8"/>'],
  clapper: [18, 18, '<path d="M1 7h14v8H1z" fill="#fff"/><path d="M1 3l2-.3 1.500 2.300L2 5.500zM5 2.500l2-.3L8.500 4.500l-2 .5zM9 2l2-.3L12.500 4l-2 .3zM13 1.500L15 1v2.500l-1 .5z" fill="#fff"/>'],
  acad: [18, 16, '<path d="M0 2h18v13H0z" fill="#777"/><path d="M9 4l9-2v8l-5 5z" fill="#ccc"/><path d="M2 12L6 1l3 1 4 10-4-1-3-2z" fill="#e01828"/>', '0 0 18 16'],
  trayup: [10, 8, '<path d="M1 6l4-4 4 4" fill="none" stroke="#fff"/>', '0 0 10 8'],
  battery: [14, 12, '<path d="M4 4h10v7H4z" fill="#fff"/><path d="M3 3.500h12v8H3zM16 6v3M1 2v4h3M2 6v5" fill="none" stroke="#fff"/>'],
  volume: small('<path d="M1 6h3l4-4v12l-4-4H1zM10 5c2 2 2 4 0 6M12 3c3 3 3 7 0 10M14 1.500c4 4 4 9 0 13" fill="none" stroke="#fff"/>'),
  wifi: [12, 12, '<path d="M1 14C2 7 7 2 14 1M4 14c1-5 5-9 10-10M7 14c1-3 4-6 7-7M10 14c0-2 2-4 4-4" fill="none" stroke="#bbb"/><circle cx="14" cy="14" r="1.500" fill="#fff"/>'],
  sogou: [13, 13, '<path d="M1 2l13-1 1 13-13 1z" fill="#20b838"/><path d="M12 4H6C3 4 3 8 6 8h4c3 0 3 4 0 4H4" fill="none" stroke="#fff" stroke-width="2"/>']
};

document.querySelectorAll('[data-icon]').forEach((el) => {
  const [w, h, markup, box = '0 0 16 16'] = icons[el.dataset.icon];
  el.innerHTML = `<svg width="${w}" height="${h}" viewBox="${box}" fill="none" aria-hidden="true">${markup}</svg>`;
});
```
